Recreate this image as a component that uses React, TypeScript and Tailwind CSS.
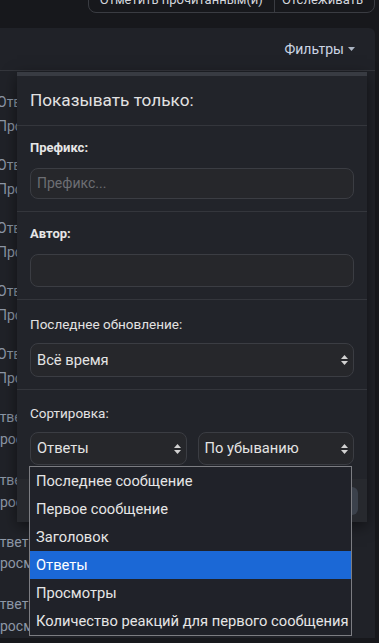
import React from "react";

const FONT = { fontFamily: "Roboto, 'Noto Sans', 'Liberation Sans', sans-serif" };

function UpDown() {
  return (
    <svg width="7" height="10" viewBox="0 0 7 10" className="shrink-0">
      <path d="M3.5 0 L7 4 H0Z" fill="#d2d2d2" />
      <path d="M0 6 H7 L3.5 10Z" fill="#d2d2d2" />
    </svg>
  );
}

function Select({ value, h }: { value: string; h: string }) {
  return (
    <div
      className={`flex items-center justify-between pl-[6px] pr-[5px] ${h} rounded-[8px] border border-[#3b3d43] bg-[#26272b] text-[14.7px] text-[#e4e4e4]`}
    >
      <span>{value}</span>
      <UpDown />
    </div>
  );
}

const rows = [
  { pt: "pt-[19px]", lh: "leading-[24px]", ml: "-ml-[3px]" },
  { pt: "pt-[19px]", lh: "leading-[24px]", ml: "-ml-[3px]" },
  { pt: "pt-[19px]", lh: "leading-[24px]", ml: "-ml-[3px]" },
  { pt: "pt-[19px]", lh: "leading-[24px]", ml: "-ml-[3px]" },
  { pt: "pt-[19px]", lh: "leading-[24px]", ml: "-ml-[3px]" },
  { pt: "pt-[20px]", lh: "leading-[22px]", ml: "-ml-[10px]" },
  { pt: "pt-[20px]", lh: "leading-[22px]", ml: "-ml-[10px]" },
  { pt: "pt-[20px]", lh: "leading-[21px]", ml: "-ml-[10px]" },
  { pt: "pt-[18px]", lh: "leading-[22px]", ml: "-ml-[10px]" },
];

export default function App() {
  return (
    <div
      className="relative w-[379px] h-[643px] overflow-hidden bg-[#17181c]"
      style={FONT}
    >
      {/* top button group */}
      <div className="flex justify-end pr-[4px]">
        <div className="flex -mt-[13px] h-[26px] border border-[#3a3c42] rounded-b-[8px] text-[13px] text-[#d3d6dc]">
          <div className="flex items-center pl-[11px] pr-[11px] border-r border-[#3a3c42]">
            Отметить прочитанным(и)
          </div>
          <div className="flex items-center pl-[7px] pr-[11px]">Отслеживать</div>
        </div>
      </div>

      {/* block */}
      <div className="mt-[15px] w-[375px] bg-[#202228] rounded-tr-[6px]">
        <div className="flex h-[43px] items-center justify-end pr-[20px] border-b border-[#34363c]">
          <span className="text-[14px] text-[#cbd5e4]">Фильтры</span>
          <svg width="7" height="4" viewBox="0 0 7 4" className="ml-[4px]">
            <path d="M0 0 H7 L3.5 4Z" fill="#aab4c2" />
          </svg>
        </div>
        <div className="flex flex-col">
          {rows.map((r, i) => (
            <div key={i} className={`h-[63px] ${r.pt} ${r.ml} text-[14px] ${r.lh} text-[#8d97a6] whitespace-nowrap`}>
              <div>Ответы: {i + 3}</div>
              <div>Просмотры: {(i + 1) * 57}</div>
            </div>
          ))}
        </div>
      </div>

      {/* filter menu */}
      <div className="absolute left-[17px] top-[72px] w-[350px] bg-[#22242a] border-t-[4px] border-[#383b42] shadow-[0_4px_14px_rgba(0,0,0,0.5)]">
        <div className="h-[50px] flex items-center px-[13px] border-b border-[#34363c] text-[17.2px] text-[#e2e2e2]">
          Показывать только:
        </div>
        <div className="px-[13px] pt-[13px] pb-[12px] border-b border-[#34363c]">
          <div className="text-[13px] leading-[18px] font-bold text-[#e6e6e6] mb-[11px]">Префикс:</div>
          <div className="h-[31px] flex items-center pl-[6px] rounded-[8px] border border-[#3b3d43] bg-[#26272b] text-[14px] text-[#6d6e73]">
            Префикс...
          </div>
        </div>
        <div className="px-[13px] pt-[13px] pb-[12px] border-b border-[#34363c]">
          <div className="text-[13px] leading-[18px] font-bold text-[#e6e6e6] mb-[11px]">Автор:</div>
          <div className="h-[33px] rounded-[8px] border border-[#3b3d43] bg-[#26272b]" />
        </div>
        <div className="px-[13px] pt-[15px] pb-[12px] border-b border-[#34363c]">
          <div className="text-[13.5px] leading-[18px] text-[#e2e2e2] mb-[10px]">Последнее обновление:</div>
          <Select value="Всё время" h="h-[34px]" />
        </div>
        <div className="px-[13px] pt-[14px] pb-[14px]">
          <div className="text-[13.5px] leading-[18px] text-[#e2e2e2] mb-[10px]">Сортировка:</div>
          <div className="grid grid-cols-2 gap-[11px]">
            <Select value="Ответы" h="h-[33px]" />
            <Select value="По убыванию" h="h-[33px]" />
          </div>
        </div>
        <div className="h-[43px] flex items-center justify-end pr-[9px] bg-[#27292e]">
          <div className="h-[28px] px-[16px] flex items-center rounded-[6px] bg-[#3b414b] text-[14px] text-[#e6e6e6]">
            Фильтр
          </div>
        </div>
      </div>

      {/* native select list */}
      <div className="absolute left-[29px] top-[466px] w-[323px] border border-[#7c7d82] bg-[#202229] text-[14.7px] text-[#e6e6e6]">
        {[
          "Последнее сообщение",
          "Первое сообщение",
          "Заголовок",
          "Ответы",
          "Просмотры",
          "Количество реакций для первого сообщения",
        ].map((t) => (
          <div
            key={t}
            className={`h-[28px] flex items-center pl-[6px] whitespace-nowrap ${t === "Ответы" ? "bg-[#1b68d6] text-white" : ""}`}
          >
            {t}
          </div>
        ))}
      </div>
    </div>
  );
}
